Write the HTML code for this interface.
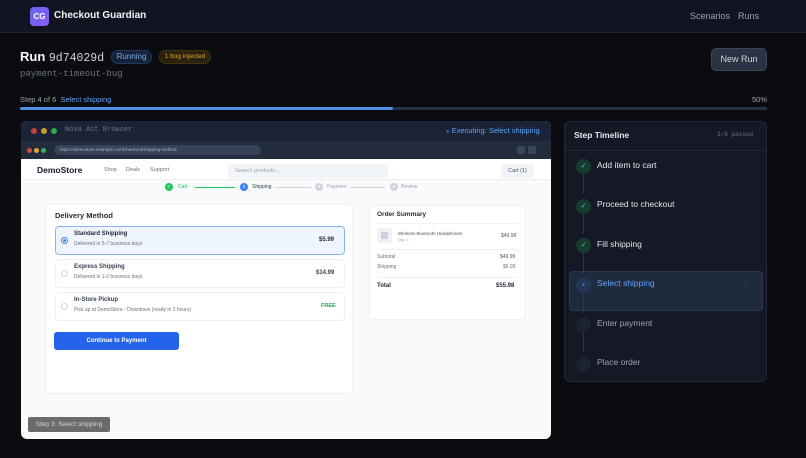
<!DOCTYPE html>
<html><head><meta charset="utf-8"><style>
*{box-sizing:border-box;margin:0;padding:0}
body{width:806px;height:458px;overflow:hidden;background:#0b0c10;font-family:"Liberation Sans",sans-serif;color:#e5e7eb;position:relative}
.a{position:absolute}
.mono{font-family:"Liberation Mono",monospace}
</style></head><body>
<div class="a" style="left:0;top:0;width:806px;height:33px;background:#111522;border-bottom:1px solid #1f2433"></div>
<div class="a" style="left:30px;top:7px;width:19px;height:19px;border-radius:4px;background:linear-gradient(135deg,#6366f1,#8b5cf6);color:#fff;font-size:8px;font-weight:bold;text-align:center;line-height:19px">CG</div>
<div class="a" style="left:54px;top:10px;font-size:10px;font-weight:bold;color:#f3f4f6">Checkout Guardian</div>
<div class="a" style="left:690px;top:11px;font-size:9px;color:#9ca3af">Scenarios</div>
<div class="a" style="left:738px;top:11px;font-size:9px;color:#9ca3af">Runs</div>

<div class="a" style="left:20px;top:49px;font-size:13px;font-weight:bold;color:#f9fafb">Run <span class="mono" style="font-weight:normal;color:#d1d5db;font-size:11.5px">9d74029d</span></div>
<div class="a" style="left:111px;top:50px;width:41px;height:14px;border-radius:7px;background:#15223a;border:1px solid #1e3a5f;color:#7ea7e0;font-size:8px;text-align:center;line-height:12px">Running</div>
<div class="a" style="left:159px;top:50px;width:52px;height:14px;border-radius:7px;background:#2a220e;border:1px solid #3f3312;color:#d4a52a;font-size:6.5px;text-align:center;line-height:12px">1 bug injected</div>
<div class="a mono" style="left:20px;top:69px;font-size:9px;color:#6b7280">payment-timeout-bug</div>
<div class="a" style="left:711px;top:48px;width:56px;height:23px;border-radius:5px;background:#2a3344;border:1px solid #394457;color:#d1d5db;font-size:9px;text-align:center;line-height:21px">New Run</div>

<div class="a" style="left:20px;top:95px;font-size:7.5px;color:#9ca3af">Step 4 of 6 &nbsp;<span style="color:#60a5fa">Select shipping</span></div>
<div class="a" style="left:752px;top:95px;font-size:7.5px;color:#9ca3af">50%</div>
<div class="a" style="left:20px;top:107px;width:747px;height:3px;border-radius:2px;background:#263145"></div>
<div class="a" style="left:20px;top:107px;width:373px;height:3px;border-radius:2px;background:#4f8fe8"></div>

<!-- browser -->
<div class="a" style="left:21px;top:121px;width:530px;height:318px;border-radius:6px;overflow:hidden;background:#f8fafc">
 <div class="a" style="left:0;top:0;width:530px;height:20px;background:#1b2436"></div>
 <div class="a" style="left:10px;top:7px;width:6px;height:6px;border-radius:50%;background:#c0443e"></div>
 <div class="a" style="left:20px;top:7px;width:6px;height:6px;border-radius:50%;background:#c9a02e"></div>
 <div class="a" style="left:30px;top:7px;width:6px;height:6px;border-radius:50%;background:#2fa84f"></div>
 <div class="a mono" style="left:44px;top:5px;font-size:7px;color:#6b7280">Nova Act Browser</div>
 <div class="a" style="left:425px;top:5px;font-size:7.5px;color:#60a5fa"><span style="font-size:6px;color:#4b6a99">●</span> Executing: Select shipping</div>
 <div class="a" style="left:0;top:20px;width:530px;height:18px;background:#232c3d"></div>
 <div class="a" style="left:6px;top:27px;width:5px;height:5px;border-radius:50%;background:#d04d46"></div>
 <div class="a" style="left:13px;top:27px;width:5px;height:5px;border-radius:50%;background:#d9aa33"></div>
 <div class="a" style="left:20px;top:27px;width:5px;height:5px;border-radius:50%;background:#35b457"></div>
 <div class="a" style="left:33px;top:24px;width:207px;height:10px;border-radius:5px;background:#37425a;color:#aab4c5;font-size:4.5px;line-height:10px;padding-left:6px">https://demostore.example.com/checkout/shipping-method</div>
 <div class="a" style="left:496px;top:25px;width:8px;height:8px;background:#3a4558;border-radius:1px"></div>
 <div class="a" style="left:507px;top:25px;width:8px;height:8px;background:#3a4558;border-radius:1px"></div>
 <!-- page -->
 <div class="a" style="left:0;top:38px;width:530px;height:21px;background:#fff;border-bottom:1px solid #eceff3"></div>
 <div class="a" style="left:16px;top:44px;font-size:8.5px;font-weight:bold;color:#111827">DemoStore</div>
 <div class="a" style="left:83px;top:46px;font-size:5.5px;color:#6b7280">Shop</div>
 <div class="a" style="left:105px;top:46px;font-size:5.5px;color:#6b7280">Deals</div>
 <div class="a" style="left:129px;top:46px;font-size:5.5px;color:#6b7280">Support</div>
 <div class="a" style="left:207px;top:43px;width:160px;height:14px;border-radius:3px;background:#f1f4f8;font-size:5.5px;color:#9ca3af;line-height:14px;padding-left:7px">Search products...</div>
 <div class="a" style="left:480px;top:43px;width:33px;height:14px;border-radius:3px;background:#f1f4f8;font-size:5.5px;color:#4b5563;line-height:14px;text-align:center">Cart (1)</div>
 <div class="a" style="left:144px;top:62px;width:8px;height:8px;border-radius:50%;background:#22c55e;color:#fff;font-size:5px;text-align:center;line-height:8px">✓</div>
 <div class="a" style="left:157px;top:63px;font-size:5px;color:#22c55e">Cart</div>
 <div class="a" style="left:174px;top:66px;width:40px;height:1px;background:#22c55e"></div>
 <div class="a" style="left:219px;top:62px;width:8px;height:8px;border-radius:50%;background:#3b82f6;color:#fff;font-size:4.5px;text-align:center;line-height:8px">2</div>
 <div class="a" style="left:231px;top:63px;font-size:5px;color:#374151">Shipping</div>
 <div class="a" style="left:254px;top:66px;width:36px;height:1px;background:#d1d5db"></div>
 <div class="a" style="left:294px;top:62px;width:8px;height:8px;border-radius:50%;background:#d1d5db;color:#fff;font-size:4.5px;text-align:center;line-height:8px">3</div>
 <div class="a" style="left:306px;top:63px;font-size:5px;color:#9ca3af">Payment</div>
 <div class="a" style="left:329px;top:66px;width:35px;height:1px;background:#d1d5db"></div>
 <div class="a" style="left:369px;top:62px;width:8px;height:8px;border-radius:50%;background:#d1d5db;color:#fff;font-size:4.5px;text-align:center;line-height:8px">4</div>
 <div class="a" style="left:380px;top:63px;font-size:5px;color:#9ca3af">Review</div>

 <div class="a" style="left:24px;top:83px;width:308px;height:190px;background:#fff;border:1px solid #eef0f3;border-radius:4px"></div>
 <div class="a" style="left:34px;top:90px;font-size:7.5px;font-weight:bold;color:#1f2937">Delivery Method</div>
 <div class="a" style="left:34px;top:105px;width:290px;height:29px;border-radius:4px;background:#eef5ff;border:1px solid #8bb4f0"></div>
 <div class="a" style="left:40px;top:116px;width:7px;height:7px;border-radius:50%;border:1px solid #3b82f6;background:#fff"><div style="margin:1px;width:3px;height:3px;border-radius:50%;background:#3b82f6"></div></div>
 <div class="a" style="left:53px;top:110px;font-size:6px;font-weight:bold;color:#1f2937">Standard Shipping</div>
 <div class="a" style="left:53px;top:120px;font-size:5px;color:#6b7280">Delivered in 5-7 business days</div>
 <div class="a" style="left:298px;top:116px;font-size:6px;font-weight:bold;color:#1f2937">$5.99</div>

 <div class="a" style="left:34px;top:138px;width:290px;height:29px;border-radius:4px;background:#fff;border:1px solid #eceff3"></div>
 <div class="a" style="left:40px;top:149px;width:7px;height:7px;border-radius:50%;border:1px solid #d1d5db"></div>
 <div class="a" style="left:53px;top:143px;font-size:6px;font-weight:bold;color:#374151">Express Shipping</div>
 <div class="a" style="left:53px;top:153px;font-size:5px;color:#6b7280">Delivered in 1-2 business days</div>
 <div class="a" style="left:295px;top:149px;font-size:6px;font-weight:bold;color:#374151">$14.99</div>

 <div class="a" style="left:34px;top:171px;width:290px;height:29px;border-radius:4px;background:#fff;border:1px solid #eceff3"></div>
 <div class="a" style="left:40px;top:182px;width:7px;height:7px;border-radius:50%;border:1px solid #d1d5db"></div>
 <div class="a" style="left:53px;top:176px;font-size:6px;font-weight:bold;color:#374151">In-Store Pickup</div>
 <div class="a" style="left:53px;top:186px;font-size:5px;color:#6b7280">Pick up at DemoStore - Downtown (ready in 2 hours)</div>
 <div class="a" style="left:300px;top:182px;font-size:5.5px;font-weight:bold;color:#22a050">FREE</div>

 <div class="a" style="left:33px;top:211px;width:125px;height:18px;border-radius:3px;background:#2563eb;color:#fff;font-size:6px;font-weight:bold;text-align:center;line-height:18px">Continue to Payment</div>

 <div class="a" style="left:348px;top:84px;width:157px;height:115px;background:#fff;border:1px solid #eef0f3;border-radius:4px"></div>
 <div class="a" style="left:356px;top:90px;font-size:6.5px;font-weight:bold;color:#1f2937">Order Summary</div>
 <div class="a" style="left:356px;top:102px;width:141px;height:1px;background:#eef0f3"></div>
 <div class="a" style="left:356px;top:107px;width:15px;height:15px;border-radius:2px;background:#eef1f5"><div style="margin:4px;width:7px;height:7px;background:#cbd2dc"></div></div>
 <div class="a" style="left:377px;top:110px;font-size:4.5px;color:#4b5563">Wireless Bluetooth Headphones</div>
 <div class="a" style="left:377px;top:116px;font-size:4px;color:#9ca3af">Qty: 1</div>
 <div class="a" style="left:480px;top:112px;font-size:5px;color:#4b5563">$49.99</div>
 <div class="a" style="left:356px;top:128px;width:141px;height:1px;background:#eef0f3"></div>
 <div class="a" style="left:356px;top:133px;font-size:5px;color:#6b7280">Subtotal</div>
 <div class="a" style="left:479px;top:133px;font-size:5px;color:#4b5563">$49.99</div>
 <div class="a" style="left:356px;top:143px;font-size:5px;color:#6b7280">Shipping</div>
 <div class="a" style="left:482px;top:143px;font-size:5px;color:#6b7280">$5.99</div>
 <div class="a" style="left:356px;top:156px;width:141px;height:1px;background:#eef0f3"></div>
 <div class="a" style="left:356px;top:162px;font-size:6px;font-weight:bold;color:#1f2937">Total</div>
 <div class="a" style="left:475px;top:162px;font-size:6px;font-weight:bold;color:#1f2937">$55.98</div>

 <div class="a" style="left:7px;top:296px;width:82px;height:15px;border-radius:2px;background:#6b6b6b;color:#d4d4d4;font-size:6.5px;text-align:center;line-height:15px">Step 3: Select shipping</div>
</div>

<!-- timeline -->
<div class="a" style="left:564px;top:121px;width:203px;height:261px;border-radius:6px;background:#141925;border:1px solid #222938">
 <div class="a" style="left:9px;top:8px;font-size:8.5px;font-weight:bold;color:#e5e7eb">Step Timeline</div>
 <div class="a mono" style="left:152px;top:9px;font-size:6px;color:#6b7280">3/6 passed</div>
 <div class="a" style="left:0;top:28px;width:201px;height:1px;background:#222938"></div>
 <div class="a" style="left:4px;top:149px;width:194px;height:40px;border-radius:4px;background:#1f2a3c;border:1px solid #2a3750"></div>
 <div class="a" style="left:177px;top:157px;font-size:7px;color:#4b5563">···</div>
</div>
<div class="a" style="left:583px;top:174px;width:1px;height:20px;background:#2f3748"></div>
<div class="a" style="left:583px;top:214px;width:1px;height:20px;background:#2f3748"></div>
<div class="a" style="left:583px;top:253px;width:1px;height:20px;background:#2f3748"></div>
<div class="a" style="left:583px;top:293px;width:1px;height:20px;background:#2f3748"></div>
<div class="a" style="left:583px;top:332px;width:1px;height:20px;background:#2f3748"></div>

<div class="a" style="left:576px;top:159px;width:15px;height:15px;border-radius:50%;background:#173b30;color:#4ade80;font-size:7px;text-align:center;line-height:15px">✓</div>
<div class="a" style="left:597px;top:160px;font-size:8.5px;color:#e5e7eb">Add item to cart</div>
<div class="a" style="left:576px;top:199px;width:15px;height:15px;border-radius:50%;background:#173b30;color:#4ade80;font-size:7px;text-align:center;line-height:15px">✓</div>
<div class="a" style="left:597px;top:199px;font-size:8.5px;color:#e5e7eb">Proceed to checkout</div>
<div class="a" style="left:576px;top:238px;width:15px;height:15px;border-radius:50%;background:#173b30;color:#4ade80;font-size:7px;text-align:center;line-height:15px">✓</div>
<div class="a" style="left:597px;top:239px;font-size:8.5px;color:#e5e7eb">Fill shipping</div>
<div class="a" style="left:576px;top:278px;width:15px;height:15px;border-radius:50%;background:#243656;color:#3b82f6;font-size:5px;text-align:center;line-height:15px">●</div>
<div class="a" style="left:597px;top:278px;font-size:8.5px;color:#60a5fa">Select shipping</div>
<div class="a" style="left:576px;top:317px;width:15px;height:15px;border-radius:50%;background:#1c2230;color:#4b5563;font-size:6px;text-align:center;line-height:15px">○</div>
<div class="a" style="left:597px;top:318px;font-size:8.5px;color:#9ca3af">Enter payment</div>
<div class="a" style="left:576px;top:357px;width:15px;height:15px;border-radius:50%;background:#1c2230;color:#4b5563;font-size:6px;text-align:center;line-height:15px">○</div>
<div class="a" style="left:597px;top:357px;font-size:8.5px;color:#9ca3af">Place order</div>
</body></html>
